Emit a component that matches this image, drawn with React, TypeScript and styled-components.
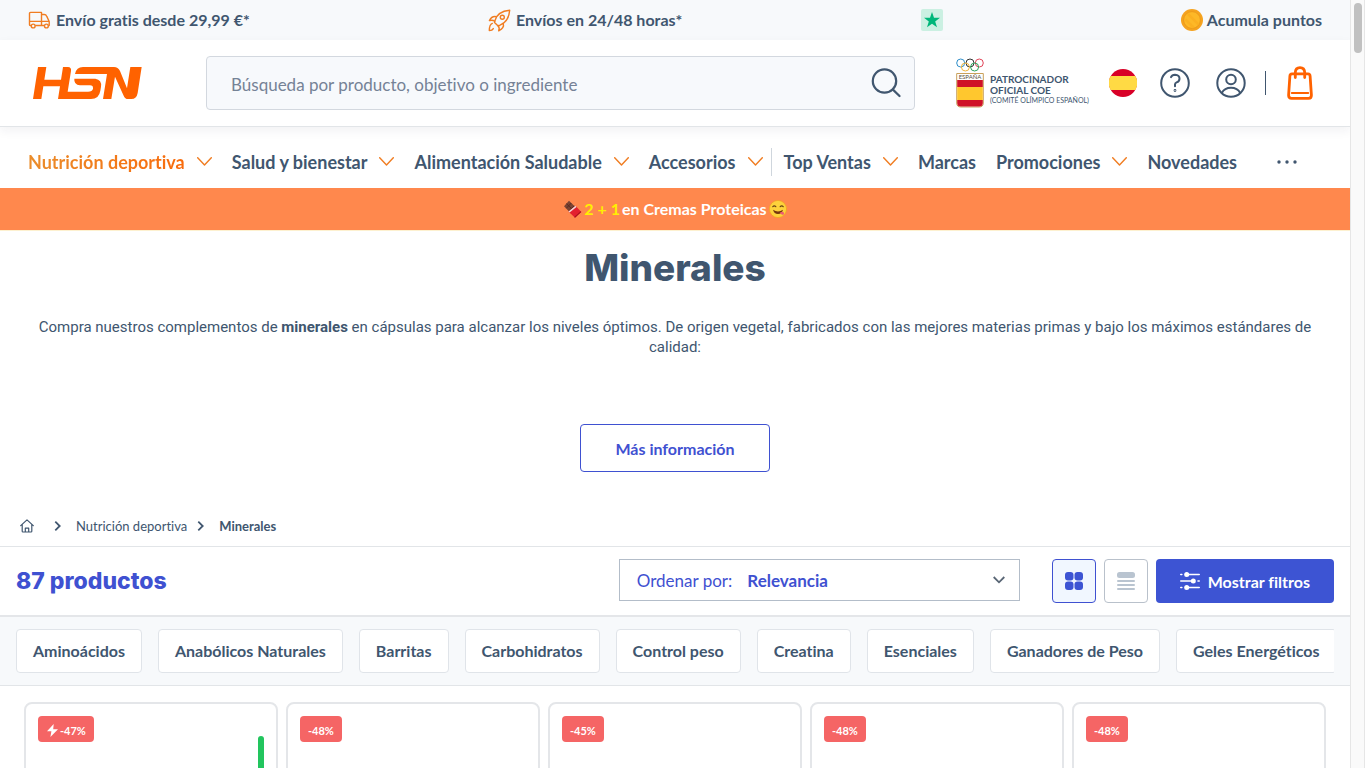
import React from "react";
import styled, { createGlobalStyle } from "styled-components";

const ink = "#40566f";
const orange = "#ff6200";
const amber = "#f07d22";
const blue = "#3f51d1";
const line = "#e2e5e8";

const GlobalStyle = createGlobalStyle`
  *, *::before, *::after { box-sizing: border-box; }
  body { margin: 0; background: #fff; color: ${ink}; font-family: Lato, "Liberation Sans", sans-serif; font-variant-ligatures: none; }
  button, input, select { font-family: inherit; color: inherit; font-variant-ligatures: inherit; }
  a { color: inherit; text-decoration: none; }
  svg { display: block; flex-shrink: 0; }
`;

const Shell = styled.div`
  display: flex;
  height: 100vh;
  overflow: hidden;
`;

const Page = styled.div`
  flex: 1;
  min-width: 0;
  overflow: hidden;
`;

const ScrollTrack = styled.div`
  flex: 0 0 15px;
  padding: 3px 2px 0 3px;
  background: #fafafa;
  border-left: 1px solid #e6e6e6;
  border-right: 1px solid #e6e6e6;
`;

const ScrollThumb = styled.div`
  height: 50px;
  border-radius: 4px;
  background: #c1c1c1;
`;

const TopBar = styled.div`
  display: flex;
  align-items: center;
  justify-content: space-between;
  height: 40px;
  padding: 0 28px;
  background: #f7f9fb;
`;

const Benefit = styled.a`
  display: flex;
  align-items: center;
  gap: ${(p: { $gap?: number }) => p.$gap ?? 5}px;
  font-size: 16px;
  font-weight: 700;
  line-height: 20px;
  white-space: nowrap;
`;

const Header = styled.header`
  display: flex;
  align-items: center;
  height: 87px;
  padding: 0 34px 0 33px;
  border-bottom: 1px solid ${line};
  box-shadow: 0 4px 10px rgba(30, 40, 60, 0.06);
`;

const SearchForm = styled.form`
  display: flex;
  align-items: center;
  flex: 1;
  height: 54px;
  margin: 0 41px 0 64px;
  padding: 0 12px 0 24px;
  border: 1px solid #d3d8df;
  border-radius: 4px;
  background: #f7f9fc;
`;

const SearchInput = styled.input`
  flex: 1;
  min-width: 0;
  height: 40px;
  padding: 2px 0 0;
  border: 0;
  outline: 0;
  background: transparent;
  font-size: 17px;
  &::placeholder { color: #758296; opacity: 1; }
`;

const IconButton = styled.button`
  display: flex;
  align-items: center;
  justify-content: center;
  width: 32px;
  height: 36px;
  padding: 0;
  border: 0;
  background: none;
  cursor: pointer;
`;

const Sponsor = styled.a`
  display: flex;
  align-items: flex-end;
  gap: 6px;
  width: 128px;
  margin-right: 23px;
`;

const SponsorText = styled.span`
  display: flex;
  flex-direction: column;
  padding-bottom: 3px;
  font-size: 10px;
  font-weight: 700;
  line-height: 11px;
  white-space: nowrap;
`;

const SponsorNote = styled.small`
  font-size: 7px;
  font-weight: 400;
  line-height: 9px;
`;

const Account = styled.div`
  display: flex;
  gap: 24px;
  margin-left: 20px;
`;

const HeaderDivider = styled.span`
  width: 1px;
  height: 24px;
  margin: 0 18px;
  background: ${ink};
`;

const Nav = styled.nav`
  display: flex;
  align-items: center;
  gap: 20px;
  height: 61px;
  padding: 8px 28px 0;
`;

const NavLink = styled.a`
  display: flex;
  align-items: center;
  gap: 12px;
  font-size: 18px;
  font-weight: 700;
  line-height: 24px;
  white-space: nowrap;
`;

const ActiveLabel = styled.span`
  background: linear-gradient(90deg, #ea8d2b, #f96b0c);
  background-clip: text;
  -webkit-background-clip: text;
  color: transparent;
`;

const NavGroup = styled.div`
  display: flex;
  align-items: center;
  gap: 20px;
  & + & {
    padding-left: 12px;
    margin-left: -12px;
    border-left: 1px solid #cfd6dd;
    height: 28px;
  }
`;

const MoreButton = styled(IconButton)`
  width: 20px;
  margin-left: 20px;
`;

const Promo = styled.a`
  display: flex;
  align-items: center;
  justify-content: center;
  gap: 2px;
  height: 42px;
  background: #ff884d;
  color: #fff;
  font-size: 16px;
  font-weight: 700;
  line-height: 20px;
`;

const Offer = styled.span`
  color: #ffef00;
`;

const Intro = styled.section`
  display: flex;
  flex-direction: column;
  align-items: center;
  padding: 13px 24px 34px;
  border-top: 1px solid #fdf1d0;
`;

const Title = styled.h1`
  margin: 0 0 25px;
  font-family: Inter, Lato, sans-serif;
  font-size: 37px;
  font-weight: 800;
  line-height: 48px;
`;

const Description = styled.p`
  margin: 0 0 67px;
  font-family: Roboto, Lato, sans-serif;
  font-size: 15px;
  line-height: 20px;
  text-align: center;
`;

const MoreInfo = styled.button`
  height: 48px;
  padding: 0 34px;
  border: 1px solid ${blue};
  border-radius: 4px;
  background: #fff;
  color: ${blue};
  font-size: 16px;
  font-weight: 700;
  cursor: pointer;
`;

const Breadcrumb = styled.nav`
  display: flex;
  align-items: center;
  gap: 10px;
  height: 41px;
  padding: 0 20px;
  border-bottom: 1px solid ${line};
  font-size: 13px;
  line-height: 16px;
`;

const Crumb = styled.a<{ $current?: boolean }>`
  padding-left: 5px;
  font-weight: ${(p) => (p.$current ? 700 : 400)};
`;

const HomeLink = styled.a`
  margin-right: 10px;
`;

const Toolbar = styled.div`
  display: flex;
  align-items: flex-start;
  gap: 8px;
  padding: 12px 16px;
  border-bottom: 2px solid #e4e6e9;
`;

const Count = styled.h2`
  flex: 1;
  margin: 0;
  color: ${blue};
  font-family: Inter, Lato, sans-serif;
  font-size: 23px;
  font-weight: 800;
  line-height: 44px;
`;

const SortBox = styled.div`
  display: flex;
  align-items: center;
  width: 401px;
  height: 42px;
  margin-right: 24px;
  padding: 0 14px 0 17px;
  border: 1px solid #b3bdc9;
  color: ${blue};
  font-size: 17px;
`;

const SortSelect = styled.select`
  flex: 1;
  height: 40px;
  padding: 0 0 0 15px;
  border: 0;
  outline: 0;
  appearance: none;
  background: none;
  color: ${blue};
  font-size: 17px;
  font-weight: 700;
`;

const ViewButton = styled.button<{ $active?: boolean }>`
  display: flex;
  align-items: center;
  justify-content: center;
  width: 44px;
  height: 44px;
  padding: 0;
  border: 1px solid ${(p) => (p.$active ? blue : "#b9c1cb")};
  border-radius: 4px;
  background: ${(p) => (p.$active ? "#f1f7ff" : "#fff")};
  cursor: pointer;
`;

const FilterButton = styled.button`
  display: flex;
  align-items: center;
  gap: 8px;
  height: 44px;
  padding: 0 24px;
  border: 0;
  border-radius: 4px;
  background: #3d54d3;
  color: #fff;
  font-size: 16px;
  font-weight: 700;
  cursor: pointer;
`;

const ChipBand = styled.div`
  padding: 12px 16px;
  border-bottom: 1px solid ${line};
  background: #f7f9fb;
`;

const ChipList = styled.div`
  display: flex;
  gap: 16px;
  overflow: hidden;
`;

const Chip = styled.a`
  flex-shrink: 0;
  padding: 0 16px;
  border: 1px solid #e0e4e9;
  border-radius: 4px;
  background: #fff;
  font-size: 16px;
  font-weight: 700;
  line-height: 42px;
  white-space: nowrap;
`;

const Products = styled.main`
  display: grid;
  grid-template-columns: repeat(5, 1fr);
  gap: 8px;
  padding: 16px 24px;
`;

const Card = styled.article`
  display: flex;
  align-items: flex-start;
  justify-content: space-between;
  min-height: 400px;
  padding: 12px;
  border: 2px solid #e4e6e9;
  border-radius: 8px;
`;

const Discount = styled.span`
  display: flex;
  align-items: center;
  gap: 1px;
  height: 26px;
  padding: 2px 8px 0;
  border-radius: 4px;
  background: #f56565;
  color: #fff;
  font-size: 11px;
  font-weight: 700;
`;

const StockBar = styled.span`
  width: 6px;
  height: 160px;
  margin-top: 20px;
  border-radius: 3px;
  background: #22c55e;
`;

const Logo = () => (
  <svg width="109" height="34" viewBox="99 200 327 98" fill={orange} aria-label="HSN">
    <path d="M114 201H139L133 239H183L189 201H204Q215 202 213 213L203 275H264Q277 275 279 266Q280 256 270 256H240Q221 254 223 236H286Q306 239 303 260L301 272Q297 297 273 297H174L180 259H130L124 297H99Z" />
    <path d="M225 222Q229 201 249 201H342Q354 201 360 213L381 265L391 201H425L413 279Q410 297 394 297H384Q375 297 371 287L345 230L334 297H309L321 222Z" />
  </svg>
);

const TruckIcon = () => (
  <svg width="23" height="18" viewBox="0 0 23 18" fill="none" stroke={amber} strokeWidth="1.4" strokeLinejoin="round">
    <path d="M3.3 14.5H2.2Q1.5 14.5 1.5 13.6V2.4Q1.5 1.4 2.5 1.4H13.5V14.5H7.2M1.5 10.4H13.5M13.5 3.5H16.2Q18 3.5 18.8 5.4L21.2 10.5V14.5H20.4M16.4 14.5H13.5M13.5 10.4H21" />
    <circle cx="5.2" cy="15" r="1.9" />
    <circle cx="18.4" cy="15" r="1.9" />
  </svg>
);

const RocketIcon = () => (
  <svg width="23" height="23" viewBox="0 0 23 23" fill="none" stroke={amber} strokeWidth="1.4" strokeLinecap="round" strokeLinejoin="round">
    <path d="M7 11.5Q9.5 2.4 21.7 1.3Q20.7 12.8 12 16.2L9.9 16.7L6.5 13.4Z" />
    <circle cx="14.3" cy="8.2" r="2" />
    <path d="M8.2 7.7Q3.8 6.8 1.4 11.6Q4.8 10.7 6.7 12.3M15.2 14.4Q16.7 18.6 10.7 21.8Q12 18.8 10 16.7M4.3 14.4Q1.4 15.3 1.3 21.6Q4.4 21.6 5.3 19.6" />
  </svg>
);

const StarIcon = () => (
  <svg width="22" height="22" viewBox="0 0 22 22" aria-label="Trustpilot">
    <rect width="22" height="22" rx="2" fill="#cbf0e2" />
    <path d="M11 3L13 8.8H19L14.2 12.4L16 18.3L11 14.8L6 18.3L7.8 12.4L3 8.8H9Z" fill="#00b67a" />
  </svg>
);

const CoinIcon = () => (
  <svg width="22" height="22" viewBox="0 0 22 22">
    <circle cx="11" cy="11" r="11" fill="#f5a31f" />
    <circle cx="11" cy="11" r="8.4" fill="#fdb827" stroke="#ea9617" strokeWidth=".8" />
    <path d="M4.5 10.5L12.5 18.5M7 5L17.5 15.5" stroke="#fbb021" strokeWidth="2.5" />
  </svg>
);

const Chevron = () => (
  <svg width="15" height="9" viewBox="0 0 15 9" fill="none" stroke={amber} strokeWidth="1.4" strokeLinecap="round" strokeLinejoin="round">
    <path d="M.7 .7L7.5 8L14.3 .7" />
  </svg>
);

const SelectChevron = () => (
  <svg width="12" height="8" viewBox="0 0 12 8" fill="none" stroke="#596675" strokeWidth="1.8">
    <path d="M.7 1L6 6.3L11.3 1" />
  </svg>
);

const CrumbArrow = () => (
  <svg width="7" height="10" viewBox="0 0 7 10" fill="none" stroke={ink} strokeWidth="1.8">
    <path d="M1.3 .7L5.7 5L1.3 9.3" />
  </svg>
);

const SearchIcon = () => (
  <svg width="30" height="30" viewBox="0 0 30 30" fill="none" stroke={ink} strokeWidth="2.2" strokeLinecap="round">
    <circle cx="13.5" cy="13" r="11.7" />
    <path d="M21.7 21.4L28.5 28" />
  </svg>
);

const CoeEmblem = () => (
  <svg width="28" height="50" viewBox="0 0 28 50" fill="none">
    <g strokeWidth="1">
      <circle cx="4.7" cy="5" r="4" stroke="#2f8ec9" />
      <circle cx="14" cy="5" r="4" stroke="#333" />
      <circle cx="23.3" cy="5" r="4" stroke="#e04458" />
      <circle cx="9.4" cy="9" r="4" stroke="#efb43d" />
      <circle cx="18.6" cy="9" r="4" stroke="#2fa35c" />
    </g>
    <path d="M.7 15.5H27.3V45Q27.3 49 23 49H5Q.7 49 .7 45Z" fill="#fff" stroke="#c9a15b" />
    <path d="M1.2 22H26.8V29H1.2Z" fill="#cf1126" />
    <path d="M1.2 29H26.8V42H1.2Z" fill="#ffc72e" />
    <path d="M1.2 42H26.8V45Q26.8 48.5 23 48.5H5Q1.2 48.5 1.2 45Z" fill="#cf1126" />
    <text x="14" y="21" textAnchor="middle" fontSize="6" fontFamily="Lato, sans-serif" fill="#5a5140">ESPAÑA</text>
  </svg>
);

const FlagIcon = () => (
  <svg width="28" height="28" viewBox="0 0 28 28">
    <circle cx="14" cy="14" r="14" fill="#d80027" />
    <path d="M1.7 7H26.3A14 14 0 0 1 26.3 21H1.7A14 14 0 0 1 1.7 7Z" fill="#ffda44" />
  </svg>
);

const HelpIcon = () => (
  <svg width="30" height="30" viewBox="0 0 30 30" fill="none" stroke={ink} strokeWidth="2" strokeLinecap="round">
    <circle cx="15" cy="15" r="13.8" />
    <path d="M11 9.2Q12 6.9 15 6.8Q19.6 7 19.5 10.8Q19.3 13.3 16.6 14.4Q15 15.1 15 16.6V18.3" />
    <circle cx="15" cy="22.5" r=".4" />
  </svg>
);

const UserIcon = () => (
  <svg width="30" height="30" viewBox="0 0 30 30" fill="none" stroke={ink} strokeWidth="2">
    <circle cx="15" cy="15" r="13.7" />
    <circle cx="15" cy="11.5" r="4.8" />
    <path d="M5.8 25Q8.5 19.8 15 19.8Q21.5 19.8 24.2 25" />
  </svg>
);

const BagIcon = () => (
  <svg width="26" height="34" viewBox="0 0 26 34" fill="none" stroke={orange} strokeWidth="2.8" strokeLinecap="round" strokeLinejoin="round">
    <path d="M5 7.8H21Q23 7.8 23.1 10L24.4 29.2Q24.4 32.4 21.5 32.4H4.5Q1.6 32.4 1.6 29.2L2.9 10Q3 7.8 5 7.8Z" />
    <path d="M8.3 11.5V6.5Q8.5 1.6 13 1.6Q17.5 1.6 17.7 6.5V11.5" />
    <path d="M4.8 27H21.2" strokeWidth="2" />
  </svg>
);

const DotsIcon = () => (
  <svg width="20" height="4" viewBox="0 0 20 4" fill={ink}>
    <circle cx="2" cy="2" r="1.7" />
    <circle cx="10" cy="2" r="1.7" />
    <circle cx="18" cy="2" r="1.7" />
  </svg>
);

const ChocolateIcon = () => (
  <svg width="19" height="18" viewBox="0 0 19 18">
    <path d="M6 .8L14 8.5L8 13.5L1 6.2Z" fill="#7b4433" />
    <path d="M3.4 3.6L11 11M8.3 3L3.4 8.2M11.2 5.8L6 10.8" stroke="#58291f" strokeWidth=".9" />
    <path d="M12.5 5.8L18.3 12L12 17.8L5.5 11.5Z" fill="#e3202f" />
    <path d="M12.5 5.8L13.5 6.9L6.6 12.6L5.5 11.5Z" fill="#f0d8d8" />
    <path d="M12 17.8L18.3 12L17.6 11.2L11.2 17Z" fill="#a9121e" />
  </svg>
);

const YumIcon = () => (
  <svg width="18" height="18" viewBox="0 0 18 18" fill="none" strokeLinecap="round">
    <circle cx="9" cy="9" r="8.6" fill="#fdd23c" stroke="#f1a51e" strokeWidth=".7" />
    <path d="M3.8 6.7Q5.3 4.9 6.8 6.7M11.2 6.7Q12.7 4.9 14.2 6.7" stroke="#6b4314" strokeWidth="1.2" />
    <path d="M4 9.8Q9 13.4 14 9.8Q13 14 9 14Q5 14 4 9.8Z" fill="#74370f" />
    <path d="M11 12.6Q13.2 10.8 14.8 12.4Q15.6 14.8 13.4 14.8Q11.6 14.6 11 12.6Z" fill="#ef5b73" />
  </svg>
);

const HomeIcon = () => (
  <svg width="14" height="14" viewBox="0 0 14 14" fill="none" stroke={ink} strokeWidth="1.2" strokeLinejoin="round" strokeLinecap="round" aria-label="Inicio">
    <path d="M.7 6.6L7 .9L13.3 6.6M2.2 5.5V12.2Q2.2 13 3 13H11Q11.8 13 11.8 12.2V5.5M5.3 13V9.2H8.7V13" />
  </svg>
);

const GridIcon = () => (
  <svg width="18" height="18" viewBox="0 0 18 18" fill="#3d54d3">
    <rect width="8.5" height="8.5" rx="3" />
    <rect x="9.5" width="8.5" height="8.5" rx="3" />
    <rect y="9.5" width="8.5" height="8.5" rx="3" />
    <rect x="9.5" y="9.5" width="8.5" height="8.5" rx="3" />
  </svg>
);

const ListIcon = () => (
  <svg width="18" height="18" viewBox="0 0 18 18" fill="#b9c4d0">
    <rect width="18" height="6" rx="2.5" />
    <rect y="8" width="18" height="2" rx="1" />
    <rect y="12" width="18" height="2" rx="1" />
    <rect y="16" width="18" height="2" rx="1" />
  </svg>
);

const SlidersIcon = () => (
  <svg width="20" height="18" viewBox="0 0 20 18" stroke="#fff" strokeWidth="1.6" strokeLinecap="round">
    <path d="M.8 2.5H1.8M6 2.5H19.2M.8 9H13M18 9H19.2M.8 15.5H1.8M6 15.5H19.2" />
    <g fill="#fff" stroke="none">
      <circle cx="6.7" cy="2.5" r="2.5" />
      <circle cx="13.3" cy="9" r="2.5" />
      <circle cx="6.7" cy="15.5" r="2.5" />
    </g>
  </svg>
);

const BoltIcon = () => (
  <svg width="13" height="13" viewBox="0 0 13 13" fill="#fff">
    <path d="M7.7 0L1 7.2H5.4L4.4 13L12 5.2H7.2Z" />
  </svg>
);

const chips = [
  "Aminoácidos", "Anabólicos Naturales", "Barritas", "Carbohidratos", "Control peso",
  "Creatina", "Esenciales", "Ganadores de Peso", "Geles Energéticos",
];

const products = [
  { discount: "-47%", flash: true },
  { discount: "-48%" },
  { discount: "-45%" },
  { discount: "-48%" },
  { discount: "-48%" },
];

const mainLinks = ["Salud y bienestar", "Alimentación Saludable", "Accesorios"];
const extraLinks = [
  { label: "Top Ventas", menu: true },
  { label: "Marcas" },
  { label: "Promociones", menu: true },
  { label: "Novedades" },
];

export default function App() {
  return (
    <>
      <GlobalStyle />
      <Shell>
        <Page>
          <TopBar>
            <Benefit href="#"><TruckIcon />Envío gratis desde 29,99 €*</Benefit>
            <Benefit href="#"><RocketIcon />Envíos en 24/48 horas*</Benefit>
            <Benefit href="#"><StarIcon /></Benefit>
            <Benefit href="#" $gap={4}><CoinIcon />Acumula puntos</Benefit>
          </TopBar>
          <Header>
            <a href="#"><Logo /></a>
            <SearchForm role="search">
              <SearchInput type="text" aria-label="Buscar" placeholder="Búsqueda por producto, objetivo o ingrediente" />
              <IconButton type="button" aria-label="Buscar"><SearchIcon /></IconButton>
            </SearchForm>
            <Sponsor href="#">
              <CoeEmblem />
              <SponsorText>
                <span>PATROCINADOR</span>
                <span>OFICIAL COE</span>
                <SponsorNote>(COMITÉ OLÍMPICO ESPAÑOL)</SponsorNote>
              </SponsorText>
            </Sponsor>
            <IconButton aria-label="País"><FlagIcon /></IconButton>
            <Account>
              <IconButton aria-label="Ayuda"><HelpIcon /></IconButton>
              <IconButton aria-label="Mi cuenta"><UserIcon /></IconButton>
            </Account>
            <HeaderDivider />
            <IconButton aria-label="Carrito"><BagIcon /></IconButton>
          </Header>
          <Nav>
            <NavGroup>
              <NavLink href="#"><ActiveLabel>Nutrición deportiva</ActiveLabel><Chevron /></NavLink>
              {mainLinks.map((label) => (
                <NavLink href="#" key={label}>{label}<Chevron /></NavLink>
              ))}
            </NavGroup>
            <NavGroup>
              {extraLinks.map(({ label, menu }) => (
                <NavLink href="#" key={label}>{label}{menu && <Chevron />}</NavLink>
              ))}
            </NavGroup>
            <MoreButton aria-label="Más"><DotsIcon /></MoreButton>
          </Nav>
          <Promo href="#">
            <ChocolateIcon />
            <Offer>2 + 1</Offer>
            <span>en Cremas Proteicas</span>
            <YumIcon />
          </Promo>
          <Intro>
            <Title>Minerales</Title>
            <Description>
              Compra nuestros complementos de <strong>minerales</strong> en cápsulas para alcanzar los niveles
              óptimos. De origen vegetal, fabricados con las mejores materias primas y bajo los máximos estándares
              de calidad:
            </Description>
            <MoreInfo>Más información</MoreInfo>
          </Intro>
          <Breadcrumb aria-label="Ruta">
            <HomeLink href="#"><HomeIcon /></HomeLink>
            <CrumbArrow />
            <Crumb href="#">Nutrición deportiva</Crumb>
            <CrumbArrow />
            <Crumb href="#" $current>Minerales</Crumb>
          </Breadcrumb>
          <Toolbar>
            <Count>87 productos</Count>
            <SortBox>
              <label htmlFor="sort">Ordenar por:</label>
              <SortSelect id="sort" defaultValue="Relevancia">
                <option>Relevancia</option>
                <option>Precio</option>
              </SortSelect>
              <SelectChevron />
            </SortBox>
            <ViewButton $active aria-label="Cuadrícula"><GridIcon /></ViewButton>
            <ViewButton aria-label="Lista"><ListIcon /></ViewButton>
            <FilterButton><SlidersIcon />Mostrar filtros</FilterButton>
          </Toolbar>
          <ChipBand>
            <ChipList>
              {chips.map((label) => (
                <Chip href="#" key={label}>{label}</Chip>
              ))}
            </ChipList>
          </ChipBand>
          <Products>
            {products.map(({ discount, flash }, i) => (
              <Card key={i}>
                <Discount>{flash && <BoltIcon />}{discount}</Discount>
                {flash && <StockBar />}
              </Card>
            ))}
          </Products>
        </Page>
        <ScrollTrack><ScrollThumb /></ScrollTrack>
      </Shell>
    </>
  );
}
